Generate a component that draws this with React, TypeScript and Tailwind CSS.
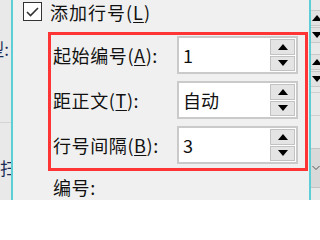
import React from "react";

const font = { fontFamily: '"Noto Sans CJK SC", "Noto Sans", sans-serif' };

function Arrow({ up }: { up: boolean }) {
  return (
    <svg width="10" height="6" viewBox="0 0 10 6">
      {up ? <polygon points="0,6 10,6 5,0" fill="#000" /> : <polygon points="0,0 10,0 5,6" fill="#000" />}
    </svg>
  );
}

function SpinInput({ value }: { value: string }) {
  return (
    <div className="flex h-[38px] w-[121px] items-stretch border-2 border-[#cacaca] bg-white">
      <div className="flex flex-1 items-center pl-[4px] text-[18px] leading-none text-[#111]">{value}</div>
      <div className="my-px mr-px flex w-[25px] flex-col gap-px">
        <div className="flex flex-1 items-center justify-center border border-[#c2c2c2] bg-[#e4e4e4]">
          <Arrow up />
        </div>
        <div className="flex flex-1 items-center justify-center border border-[#c2c2c2] bg-[#e4e4e4]">
          <Arrow up={false} />
        </div>
      </div>
    </div>
  );
}

function Row({ label, mn, rest, value }: { label: string; mn: string; rest: string; value: string }) {
  return (
    <div className="flex h-[38px] items-center">
      <div className="w-[124px] whitespace-nowrap text-[18px] leading-none tracking-[0.6px] text-[#111]">
        {label}(<span className="underline underline-offset-2">{mn}</span>){rest}
      </div>
      <SpinInput value={value} />
    </div>
  );
}

function MiniSpin() {
  return (
    <div className="flex h-[33px] w-[12px] flex-col gap-px">
      <div className="flex flex-1 items-center justify-start border-y border-[#c8c8c8] bg-[#e2e2e2] pl-[1px]">
        <Arrow up />
      </div>
      <div className="flex flex-1 items-center justify-start border-y border-[#c8c8c8] bg-[#e2e2e2] pl-[1px]">
        <Arrow up={false} />
      </div>
    </div>
  );
}

export default function App() {
  return (
    <div className="flex h-[200px] w-[320px] overflow-hidden bg-[#f0f0f0]" style={font}>
      {/* left strip */}
      <div className="flex w-[13px] shrink-0 flex-col overflow-hidden border-r-2 border-[#5ccfd6] bg-[#e9e9e9]">
        <div className="mt-[40px] flex h-[18px] justify-end overflow-hidden whitespace-nowrap text-[17px] leading-none text-[#1a2a55]">
          <span className="mr-[2px]">型:</span>
        </div>
        <div className="mt-[64px] h-px bg-[#d4d4d4]" />
        <div className="mt-[36px] flex h-[20px] justify-end overflow-hidden whitespace-nowrap text-[17px] leading-none text-[#1a2a55]">
          <span className="-mr-[6px]">扫</span>
        </div>
      </div>

      {/* main */}
      <div className="flex w-[296px] shrink-0 flex-col text-[#111]">
        <div className="ml-[10px] mt-[2px] flex h-[19px] items-center gap-[8px]">
          <div className="flex h-[19px] w-[19px] items-center justify-center border border-[#333] bg-white">
            <svg width="13" height="10" viewBox="0 0 13 10">
              <polyline points="1,5 4.5,8.5 12,1" fill="none" stroke="#333" strokeWidth="1.6" />
            </svg>
          </div>
          <div className="whitespace-nowrap text-[18px] leading-none tracking-[1px]">
            添加行号(<span className="underline underline-offset-2">L</span>)
          </div>
        </div>

        <div className="ml-[35px] mr-px mt-[11px] flex flex-col gap-[7px] border-[3px] border-[#ff3434] pb-[4px] pl-[2px] pr-[7px] pt-px">
          <Row label="起始编号" mn="A" rest=":" value="1" />
          <Row label="距正文" mn="T" rest=":" value="自动" />
          <Row label="行号间隔" mn="B" rest=":" value="3" />
        </div>

        <div className="ml-[40px] mt-[6px] text-[18px] leading-[20px] tracking-[0.6px]">编号:</div>
      </div>

      {/* right strip */}
      <div className="flex flex-1 flex-col overflow-hidden border-l-2 border-[#5ccfd6] bg-[#e9e9e9]">
        <div className="mt-[10px]">
          <MiniSpin />
        </div>
        <div className="mt-[11px]">
          <MiniSpin />
        </div>
        <div className="mt-[5px] h-px bg-[#d0d0d0]" />
        <div className="mt-[22px] h-px bg-[#d0d0d0]" />
        <div className="mt-[32px] flex h-[40px] items-center justify-start border-y border-[#c4c4c4] bg-[#d9d9d9] pl-[1px]">
          <svg width="8" height="6" viewBox="0 0 8 6">
            <polyline points="0.5,1 4,4.5 7.5,1" fill="none" stroke="#555" strokeWidth="1" />
          </svg>
        </div>
      </div>
    </div>
  );
}
